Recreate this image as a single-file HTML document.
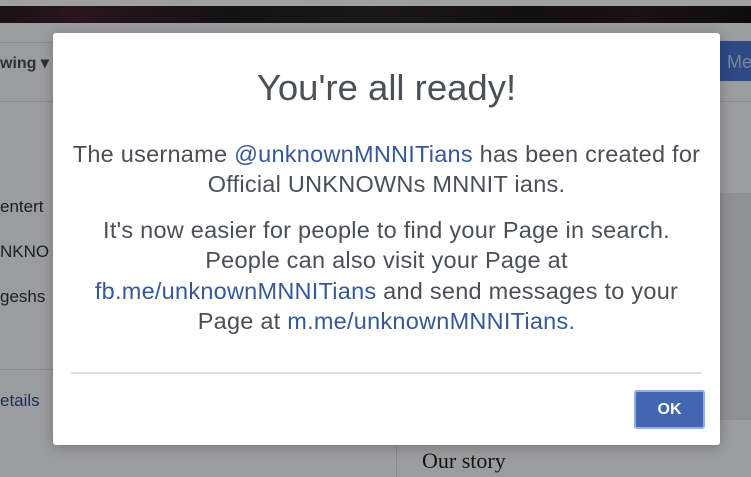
<!DOCTYPE html>
<html><head><style>
body{margin:0;width:751px;height:477px;position:relative;overflow:hidden;background:#9b9c9e;font-family:"Liberation Sans",sans-serif}
.a{position:absolute}
.t{color:#4b4f56}
a{color:#365899;text-decoration:none}
</style></head><body>
<div class="a" style="left:0;top:0;width:751px;height:6px;background:#a0a0a0"></div>
<div class="a" style="left:0;top:6px;width:751px;height:17px;background:linear-gradient(90deg,#1a1214,#2a1520 10%,#151214 30%,#1c1718 50%,#140f11 70%,#1a1214 85%,#0f0c0d)"></div>
<div class="a" style="left:0;top:42px;width:751px;height:1px;background:#8a8b8d"></div>
<div class="a" style="left:0;top:101px;width:751px;height:1px;background:#8a8b8d"></div>
<div class="a" style="left:395px;top:193px;width:356px;height:227px;background:#8f9092"></div>
<div class="a" style="left:0;top:369px;width:395px;height:1px;background:#8a8b8d"></div>
<div class="a" style="left:396px;top:420px;width:1px;height:57px;background:#8a8b8d"></div>
<div class="a" style="left:718px;top:41px;width:40px;height:40px;background:#2d4a86"></div>
<div class="a" style="left:727px;top:52px;font-size:18px;color:#7c8597">Me</div>
<div class="a" style="left:0;top:53px;font-size:16px;font-weight:bold;color:#2e3033">wing ▾</div>
<div class="a" style="left:0;top:197px;font-size:17px;color:#1c1e21">entert</div>
<div class="a" style="left:0;top:242px;font-size:17px;color:#1c1e21">NKNO</div>
<div class="a" style="left:0;top:287px;font-size:17px;color:#1c1e21">geshs</div>
<div class="a" style="left:0;top:391px;font-size:17px;color:#1d2f55">etails</div>
<div class="a" style="left:422px;top:448px;font-size:22px;font-family:'Liberation Serif',serif;color:#151515">Our story</div>
<div class="a" style="left:53px;top:33px;width:667px;height:412px;background:#fff;border-radius:3px;box-shadow:0 2px 12px rgba(0,0,0,.25)">
<div class="a t" style="left:0;top:34px;width:667px;text-align:center;font-size:36.5px">You're all ready!</div>
<div class="a t" style="left:-30px;top:106px;width:727px;text-align:center;font-size:23.5px;line-height:30px;letter-spacing:0.25px">The username <a>@unknownMNNITians</a> has been created for<br>Official UNKNOWNs MNNIT ians.</div>
<div class="a t" style="left:-30px;top:182px;width:727px;text-align:center;font-size:23.5px;line-height:30.3px;letter-spacing:0.25px">It's now easier for people to find your Page in search.<br>People can also visit your Page at<br><a>fb.me/unknownMNNITians</a> and send messages to your<br>Page at <a>m.me/unknownMNNITians.</a></div>
<div class="a" style="left:18px;top:339px;width:631px;height:2px;background:#dddfe2"></div>
<div class="a" style="left:581px;top:357px;width:67px;height:35px;background:#4267b2;border:2px solid #8fb0f0;border-radius:3px;color:#fff;font-weight:bold;font-size:16px;line-height:35px;text-align:center">OK</div>
</div>
</body></html>
